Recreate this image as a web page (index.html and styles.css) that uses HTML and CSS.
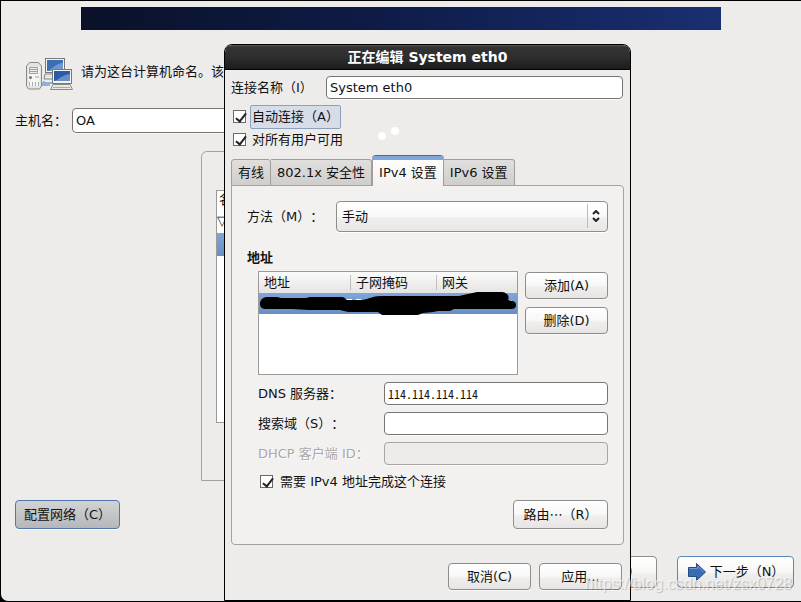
FILE: index.html
```html
<!DOCTYPE html>
<html lang="zh-CN">
<head>
    <meta charset="UTF-8">
    <title>正在编辑 System eth0</title>
    <link rel="stylesheet" href="styles.css">
</head>
<body>
    <div class="page">
        <div class="banner"></div>
        <div class="intro">
            <svg class="net_icon" width="48" height="34" viewBox="0 0 48 34">
                <path d="M1.500 8l3-3.500h9L16.500 8v20l-2 3h-11l-2-3z" fill="#e4e4e1" stroke="#888a85"/>
                <path d="M3.500 9h11v19h-11z" fill="#f6f6f4"/>
                <path d="M4.500 9.500h8v6h-8zM5 11.500h7M5 13.500h7M10 19h4" fill="#eee" stroke="#a0a29d"/>
                <circle cx="5.500" cy="19.500" r="1.500" fill="#777"/>
                <path d="M4.500 24v4M7.500 24v4M10.500 24v4M13.500 24v4" stroke="#aaa"/>
                <path d="M17 25h10M19 23v5M17 27h8" stroke="#8fb4dc" stroke-width="2"/>
                <rect x="20.500" y=".5" width="19" height="14" fill="#f4f4f2" stroke="#777974"/>
                <rect x="22" y="2" width="16" height="11" fill="#3c6eb4"/>
                <path d="M22 13c5-1 7-7 16-8v8z" fill="#7098cf"/>
                <path d="M20 16h8v5h-9z" fill="#e8e8e5" stroke="#888a85"/>
                <rect x="27.500" y="11.500" width="19" height="14" fill="#f4f4f2" stroke="#777974"/>
                <rect x="29" y="13" width="16" height="10" fill="#2a5caa"/>
                <path d="M29 23c5-1 7-6 16-7v7z" fill="#6790ca"/>
                <path d="M28 26.500h17l2.500 5h-22z" fill="#e8e8e5" stroke="#888a85"/>
                <path d="M28 29.500h17" stroke="#aaa"/>
            </svg>
            <span>请为这台计算机命名。该名称会在网络中定义这台计算机。</span>
        </div>
        <div class="host">
            <label for="host">主机名：</label>
            <input class="txt" id="host" type="text" value="OA">
        </div>
        <div class="devices">
            <table class="device_list">
                <tr><th>名称</th></tr>
                <tr><td>▽ 有线</td></tr>
                <tr class="selected"><td></td></tr>
            </table>
        </div>
        <button class="btn btn_config" type="button">配置网络（C）</button>
        <div class="nav">
            <button class="btn" type="button">
                <svg width="20" height="20" viewBox="0 0 20 20">
                    <path d="M18.500 5.500h-8v-4l-9 8.500 9 8.500v-4h8z" fill="#3a6cb0" stroke="#204a87"/>
                </svg>
                返回（B）
            </button>
            <button class="btn btn_next" type="button">
                <svg width="20" height="20" viewBox="0 0 20 20">
                    <path d="M1.500 5.500h8v-4l9 8.500-9 8.500v-4h-8z" fill="#3a6cb0" stroke="#204a87"/>
                    <path d="M2.500 6.500h8V4l6 6" fill="none" stroke="#6f9bd2"/>
                </svg>
                下一步（N）
            </button>
        </div>
    </div>

    <div class="dialog">
        <div class="title">正在编辑 System eth0</div>
        <form class="content">
            <div class="name_row">
                <label for="name">连接名称（I）</label>
                <input class="txt" id="name" type="text" value="System eth0">
            </div>
            <label class="check focused"><input type="checkbox" checked><span>自动连接（A）</span></label>
            <label class="check"><input type="checkbox" checked><span>对所有用户可用</span></label>

            <div class="tabs">
                <button class="tab" type="button">有线</button>
                <button class="tab" type="button">802.1x 安全性</button>
                <button class="tab active" type="button">IPv4 设置</button>
                <button class="tab" type="button">IPv6 设置</button>
            </div>
            <div class="panel">
                <div class="method">
                    <label for="method">方法（M）：</label>
                    <div class="combo">
                        <select id="method">
                            <option>手动</option>
                        </select>
                        <svg width="10" height="12" viewBox="0 0 10 12">
                            <path d="M2 4l3-3 3 3M2 8l3 3 3-3" fill="none" stroke="#222" stroke-width="2"/>
                        </svg>
                    </div>
                </div>
                <h2>地址</h2>
                <div class="addresses">
                    <div class="list">
                        <table>
                            <colgroup>
                                <col class="col_addr"><col class="col_mask"><col>
                            </colgroup>
                            <tr><th>地址</th><th>子网掩码</th><th>网关</th></tr>
                            <tr class="selected"><td></td><td></td><td></td></tr>
                        </table>
                        <svg class="redacted" width="258" height="24" viewBox="0 0 258 24">
                            <path d="M87 7.500h6M97 7.500h5M250 8.500h3" stroke="#fff" fill="none"/>
                            <path d="M1 12c0-4 3-7 7-7h10l4 1h25l4-1h32c3 0 4 3 5 3h15c7-1 11-4 18-4h79l18-4h24c6 0 9 4 7 8 6 1 8 2 8 5s-2 4-5 4h-57l-4 2h-12l-5 1-10 1-5 2h-36l-4-3h-30l-8-2H50l-17-1H7c-4 0-6-2-6-5z" fill="#000"/>
                        </svg>
                    </div>
                    <div class="list_btns">
                        <button class="btn" type="button">添加(A)</button>
                        <button class="btn" type="button">删除(D)</button>
                    </div>
                </div>
                <div class="fields">
                    <label for="dns">DNS 服务器：</label>
                    <input class="txt dns" id="dns" type="text" value="114.114.114.114">
                    <label for="search">搜索域（S）：</label>
                    <input class="txt" id="search" type="text">
                    <label class="off" for="dhcp">DHCP 客户端 ID：</label>
                    <input class="txt" id="dhcp" type="text" disabled>
                </div>
                <label class="check need"><input type="checkbox" checked><span>需要 IPv4 地址完成这个连接</span></label>
                <button class="btn btn_route" type="button">路由⋯（R）</button>
            </div>
            <div class="actions">
                <button class="btn" type="button">取消(C)</button>
                <button class="btn" type="button">应用...</button>
            </div>
        </form>
        <svg class="dots" width="24" height="16" viewBox="0 0 24 16">
            <circle cx="5" cy="11" r="4" fill="#fff"/>
            <circle cx="18" cy="6" r="4" fill="#fff"/>
        </svg>
    </div>
    <div class="watermark">https://blog.csdn.net/zsx0728</div>
</body>
</html>
```
FILE: styles.css
```css
* {
    box-sizing: border-box;
}

body {
    margin: 0;
    background: #000;
    position: relative;
    overflow: hidden;
    text-spacing-trim: space-all;
}

body, input, button, select {
    font-family: "DejaVu Sans", "Noto Sans CJK SC", sans-serif;
    font-size: 13px;
    line-height: 18px;
    color: #111;
}

.page {
    display: flex;
    flex-direction: column;
    min-height: 100vh;
    border: 1px solid #000;
    border-right: none;
    border-bottom-left-radius: 8px;
    padding: 6px 7px 13px 14px;
    background: #edeceb;
}

.banner {
    width: 640px;
    height: 23px;
    margin-left: 66px;
    background: linear-gradient(90deg, #0a1128, #0e1b46 45%, #1a2f72);
}

.intro {
    display: flex;
    gap: 8px;
    margin: 28px 0 0 10px;
    white-space: nowrap;
}

.intro span {
    margin-top: 5px;
}

.host {
    display: flex;
    align-items: center;
    gap: 5px;
    margin-top: 16px;
}

.host .txt {
    width: 300px;
    height: 25px;
    padding: 0 3px;
}

.txt {
    height: 23px;
    min-width: 0;
    border: 1px solid #777573;
    border-radius: 4px;
    padding: 0 3px;
    background: #fff;
    box-shadow: 0 1px 0 #f8f8f8;
}

.txt:disabled {
    border-color: #a8a6a4;
    background: #edeceb;
}

.devices {
    width: 400px;
    height: 330px;
    margin: 18px 0 0 186px;
    border: 1px solid #a5a3a1;
    border-top-left-radius: 6px;
    padding: 38px 14px;
}

.device_list {
    display: block;
    height: 233px;
    border: 1px solid #9c9a98;
    background: #fff;
}

table {
    border-collapse: collapse;
}

th {
    padding: 0 2px;
    text-align: left;
    font-weight: normal;
}

.device_list tbody {
    display: block;
}

.device_list tr {
    display: block;
    height: 21px;
}

.device_list tr.selected {
    height: 23px;
}

.device_list td {
    padding: 0;
}

.selected {
    background: linear-gradient(#7ea6d8, #668fc4);
}

.btn {
    border: 1px solid #8f8d8b;
    border-radius: 4px;
    padding: 0 6px;
    background: linear-gradient(#fff, #f7f7f6 50%, #f0efee 55%, #e6e5e3);
    box-shadow: 0 1px 0 #f8f8f8;
    white-space: nowrap;
}

.btn_config {
    width: 105px;
    height: 29px;
    margin-top: 19px;
    border-color: #5178ac;
    background: linear-gradient(#d2d3d5, #b5b7ba);
}

.nav {
    display: flex;
    justify-content: flex-end;
    gap: 20px;
    margin-top: 27px;
}

.nav .btn {
    display: flex;
    align-items: center;
    justify-content: center;
    gap: 3px;
    width: 117px;
    height: 32px;
}

.nav .btn_next {
    border-color: #5c86bf;
}

.dialog {
    position: absolute;
    left: 224px;
    top: 44px;
    width: 407px;
    border: 1px solid #000;
    border-radius: 8px 8px 0 0;
    background: #edeceb;
}

.title {
    height: 25px;
    border-bottom: 1px solid #000;
    border-radius: 7px 7px 0 0;
    background: linear-gradient(#5a5a5a, #333 2px, #2e2e2e 50%, #1c1c1c);
    color: #fff;
    font-size: 14px;
    font-weight: bold;
    line-height: 24px;
    text-align: center;
}

.content {
    display: flex;
    flex-direction: column;
    padding: 6px 6px 10px;
}

.name_row {
    display: grid;
    grid-template-columns: 95px 1fr;
    align-items: center;
    margin-bottom: 6px;
    padding-right: 1px;
}

.check {
    display: flex;
    align-items: center;
    gap: 4px;
    height: 23px;
    padding-left: 2px;
}

.check span {
    border: 1px solid transparent;
    padding: 2px 1px;
}

.focused span {
    border-color: #8ca0bd;
    border-radius: 2px;
    background: #d6dce8;
}

input[type="checkbox"] {
    appearance: none;
    width: 13px;
    height: 13px;
    margin: 0;
    border: 1px solid #6c6a68;
    background: #fff;
    position: relative;
}

input[type="checkbox"]:checked::after {
    content: "";
    position: absolute;
    left: 4px;
    top: 0;
    width: 4px;
    height: 9px;
    border: solid #222;
    border-width: 0 2px 2px 0;
    transform: rotate(38deg);
}

.tabs {
    display: flex;
    align-items: flex-end;
    margin-top: 5px;
    margin-bottom: -1px;
}

.tab {
    height: 27px;
    border: 1px solid #a09e9c;
    border-left-width: 0;
    border-radius: 0 3px 0 0;
    padding: 0 6px;
    background: linear-gradient(#e0dfdd, #cfcecb);
    white-space: nowrap;
}

.tab:first-child {
    border-left-width: 1px;
    border-top-left-radius: 3px;
}

.tab.active {
    height: 30px;
    border-top: 4px solid #80a6dc;
    border-left-width: 1px;
    border-bottom: none;
    border-radius: 4px 4px 0 0;
    box-shadow: 0 -1px 0 #47699c;
    background: linear-gradient(#fdfdfd, #f2f1f0);
    position: relative;
}

.panel {
    display: flex;
    flex-direction: column;
    border: 1px solid #a5a3a1;
    border-radius: 0 4px 4px 4px;
    padding: 15px;
    background: #f2f1f0;
}

.method {
    display: grid;
    grid-template-columns: 89px 1fr;
    align-items: center;
}

.combo {
    position: relative;
}

.combo select {
    appearance: none;
    display: block;
    width: 100%;
    height: 31px;
    border: 1px solid #8f8d8b;
    border-radius: 4px;
    padding: 0 5px;
    background: linear-gradient(#fff, #f9f9f9 50%, #f0efee 55%, #e8e7e5);
    box-shadow: 0 1px 0 #fff;
}

.combo svg {
    position: absolute;
    right: 7px;
    top: 9px;
}

.combo::after {
    content: "";
    position: absolute;
    right: 20px;
    top: 3px;
    bottom: 4px;
    border-left: 1px solid #bbb;
}

h2 {
    margin: 17px 0 4px;
    font-size: 13px;
    line-height: 18px;
}

.addresses {
    display: flex;
    gap: 7px;
    padding-left: 11px;
}

.list {
    flex: 1;
    height: 104px;
    border: 1px solid #9c9a98;
    background: #fff;
    position: relative;
}

.list table {
    width: 100%;
    table-layout: fixed;
}

.col_addr {
    width: 92px;
}

.col_mask {
    width: 86px;
}

.list th {
    height: 21px;
    padding: 0 5px;
    background: linear-gradient(90deg, #c0bebc, #c0bebc) right center / 1px 15px no-repeat, linear-gradient(#fbfbfb, #e5e4e2);
}

.list th:last-child {
    background: linear-gradient(#fbfbfb, #e5e4e2);
}

.list td {
    height: 21px;
    padding: 0;
}

.redacted {
    position: absolute;
    left: 0;
    top: 20px;
}

.list_btns {
    display: flex;
    flex-direction: column;
    gap: 8px;
    padding-top: 1px;
}

.list_btns .btn, .actions .btn {
    width: 83px;
    height: 27px;
}

.fields {
    display: grid;
    grid-template-columns: 126px 1fr;
    align-items: center;
    gap: 7px 0;
    margin-top: 7px;
    padding-left: 11px;
}

.dns {
    font-family: "Noto Sans CJK SC", sans-serif;
    font-size: 12px;
    font-feature-settings: "hwid";
}

.off {
    color: #aaa8a6;
    text-shadow: 1px 1px 0 #fff;
}

.need {
    gap: 5px;
    margin-top: 5px;
    padding-left: 13px;
}

.btn_route {
    align-self: flex-end;
    width: 95px;
    height: 29px;
    margin-top: 7px;
}

.actions {
    display: flex;
    justify-content: flex-end;
    gap: 8px;
    margin-top: 18px;
    padding-right: 2px;
}

.dots {
    position: absolute;
    left: 152px;
    top: 80px;
}

.watermark {
    position: absolute;
    right: 9px;
    bottom: 9px;
    font-family: "Liberation Sans", sans-serif;
    font-size: 16px;
    color: rgba(255, 255, 255, 0.6);
    text-shadow: 1px 1px 1px rgba(0, 0, 0, 0.2);
    pointer-events: none;
}
```
